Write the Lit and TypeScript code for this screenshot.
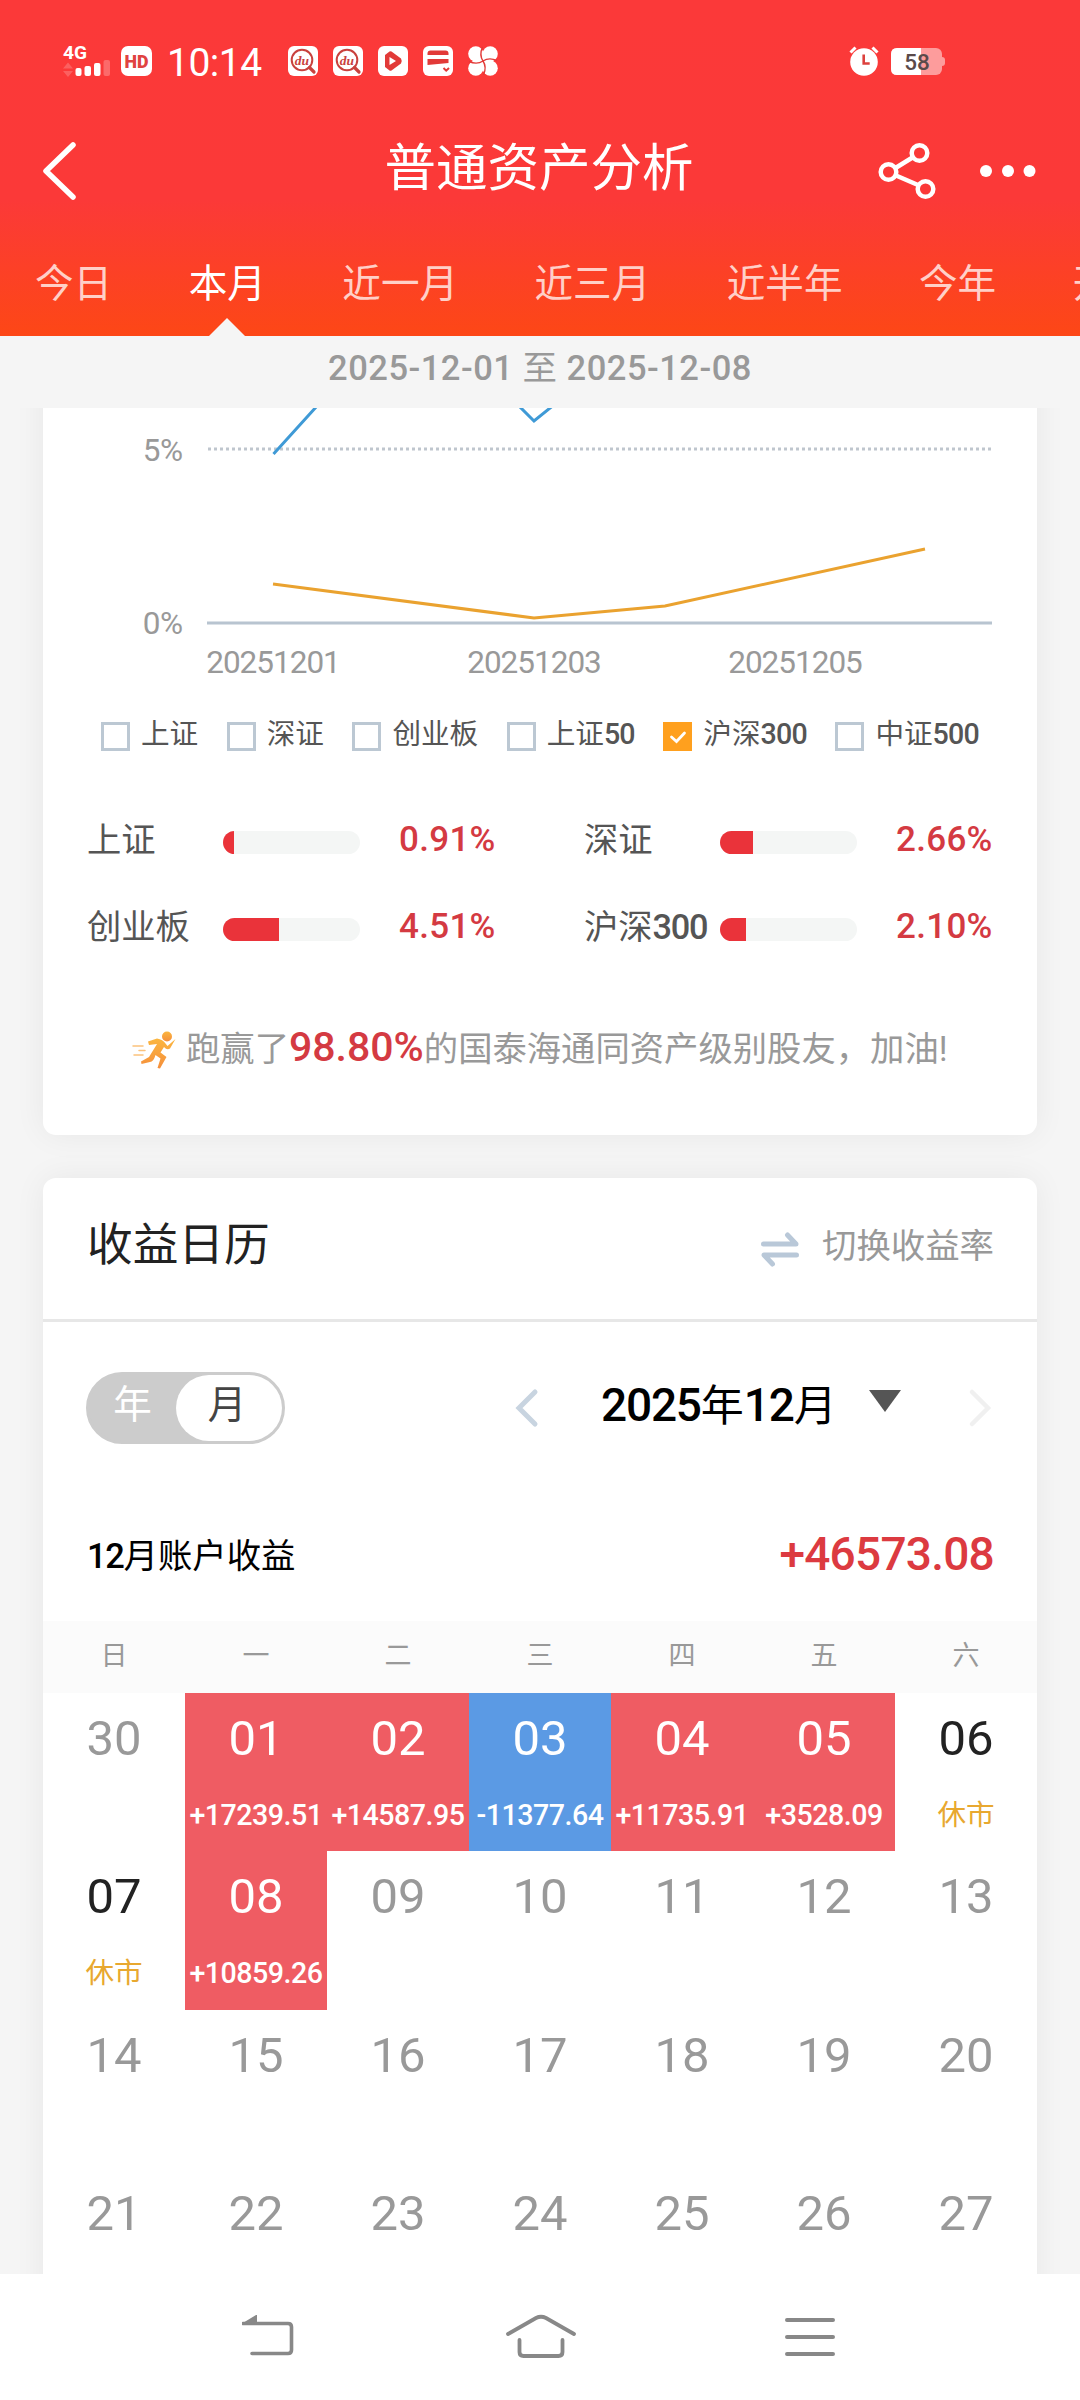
import { LitElement, html, svg, css } from "lit";
import { customElement } from "lit/decorators.js";
import { classMap } from "lit/directives/class-map.js";

interface Day {
  n: string;
  state?: "up" | "down" | "closed";
  note?: string;
}

const TABS = ["今日", "本月", "近一月", "近三月", "近半年", "今年", "开户以来"];

const INDEXES = ["上证", "深证", "创业板", "上证50", "沪深300", "中证500"];

const STATS = [
  { name: "上证", width: 11, value: "0.91%" },
  { name: "深证", width: 33, value: "2.66%" },
  { name: "创业板", width: 56, value: "4.51%" },
  { name: "沪深300", width: 26, value: "2.10%" },
];

const WEEK = ["日", "一", "二", "三", "四", "五", "六"];

const MARKED: Day[] = [
  { n: "30" },
  { n: "01", state: "up", note: "+17239.51" },
  { n: "02", state: "up", note: "+14587.95" },
  { n: "03", state: "down", note: "-11377.64" },
  { n: "04", state: "up", note: "+11735.91" },
  { n: "05", state: "up", note: "+3528.09" },
  { n: "06", state: "closed", note: "休市" },
  { n: "07", state: "closed", note: "休市" },
  { n: "08", state: "up", note: "+10859.26" },
];

const DAYS: Day[] = [
  ...MARKED,
  ...Array.from({ length: 19 }, (_, i) => ({ n: String(i + 9).padStart(2, "0") })),
];

/** Wraps the latin digit runs so that they can be spaced more tightly. */
const mixed = (text: string) =>
  text
    .split(/(\d+)/)
    .filter((part) => part)
    .map((part) => (/\d/.test(part) ? html`<span class="num">${part}</span>` : part));

const duIcon = html`<svg class="app" viewBox="0 0 30 30">
  <rect width="30" height="30" rx="6" fill="#fff" />
  <circle cx="14" cy="14" r="10.3" fill="none" stroke="#c9413d" stroke-width="2" />
  <path d="M21.5 21.5l4.500 4.500" stroke="#c9413d" stroke-width="3.2" stroke-linecap="round" />
  <text x="14" y="18.800" text-anchor="middle" class="du">du</text>
</svg>`;

@customElement("app-root")
export class AppRoot extends LitElement {
  static styles = css`
    :host {
      display: block;
      width: 1080px;
      height: 2400px;
      overflow: hidden;
      font-family: Roboto, "Noto Sans CJK SC", sans-serif;
      color: #222;
    }
    * {
      box-sizing: border-box;
    }
    svg {
      display: block;
      flex: none;
    }
    .page {
      display: flex;
      flex-direction: column;
      height: 2400px;
      background: #f5f5f5;
    }

    .head {
      height: 336px;
      flex: none;
      background: linear-gradient(#fb3939 0, #fb3938 200px, #fd4716 336px);
      color: #fff;
      display: flex;
      flex-direction: column;
      overflow: hidden;
    }
    .status {
      height: 122px;
      padding: 0 135px 0 63px;
      display: flex;
      align-items: center;
      flex: none;
    }
    .signal {
      overflow: visible;
    }
    .hd {
      margin-left: 11px;
    }
    .time {
      font-size: 39px;
      line-height: 46px;
      width: 94px;
      margin: 3px 27px 0 15px;
      letter-spacing: -0.5px;
      white-space: nowrap;
    }
    .apps {
      display: flex;
      gap: 15px;
    }
    .app {
      width: 30px;
      height: 30px;
    }
    .du {
      font: italic 700 13.5px "Liberation Serif", serif;
      fill: #c9413d;
    }
    .g4 {
      font: 700 19px Roboto, sans-serif;
      fill: #fff;
    }
    .hdt {
      font: 900 18.5px Roboto, sans-serif;
      fill: #e04340;
    }
    .alarm {
      margin-left: auto;
      margin-right: 12px;
    }
    .batt {
      font: 500 22.5px Roboto, sans-serif;
      fill: #5a4a4a;
    }

    .bar {
      height: 98px;
      padding: 0 44px 0 42px;
      display: grid;
      grid-template-columns: 200px 1fr 200px;
      align-items: center;
      flex: none;
    }
    .title {
      text-align: center;
      font-size: 51.5px;
      line-height: 60px;
      padding-bottom: 4px;
    }
    .tools {
      display: flex;
      justify-content: flex-end;
      align-items: center;
      gap: 44px;
    }
    .tabs {
      height: 116px;
      flex: none;
      display: flex;
      gap: 76.5px;
      padding-left: 35px;
      font-size: 38.6px;
      line-height: 46px;
      white-space: nowrap;
      color: #ffd0c8;
    }
    .tab {
      flex: none;
      height: 116px;
      padding-top: 41px;
      display: flex;
      flex-direction: column;
      align-items: center;
    }
    .tab.on {
      color: #fff;
    }
    .tab.on::after {
      content: "";
      margin-top: 11px;
      border: 18px solid transparent;
      border-top: 0;
      border-bottom-color: #f5f5f5;
    }

    .range {
      height: 72px;
      flex: none;
      text-align: center;
      font-size: 34.5px;
      line-height: 64px;
      font-weight: 500;
      color: #999;
      letter-spacing: 0.5px;
    }
    .zh {
      font-weight: 400;
    }

    .scroll {
      height: 1866px;
      flex: none;
      overflow: hidden;
      padding: 0 43px;
    }
    .card {
      background: #fff;
      border-radius: 13px;
      box-shadow: 0 0 32px rgba(0, 0, 0, 0.06);
    }
    .perf {
      height: 787px;
      margin-top: -60px;
      padding-top: 60px;
    }
    .chart {
      width: 994px;
      height: 284px;
    }
    .axis {
      font: 400 31.5px Roboto, sans-serif;
      fill: #999;
      letter-spacing: -1px;
    }
    .axis.y {
      letter-spacing: -0.5px;
    }
    .legend {
      display: flex;
      align-items: center;
      padding-left: 58px;
      gap: 28.5px;
      height: 88px;
      color: #555;
      font-size: 28.6px;
      line-height: 40px;
      white-space: nowrap;
    }
    .opt {
      display: flex;
      align-items: center;
      gap: 11px;
    }
    .lab {
      padding-bottom: 4px;
    }
    .legend .num {
      letter-spacing: -0.8px;
    }
    .box {
      width: 29px;
      height: 29px;
      border: 3px solid #bcc8d3;
      display: flex;
    }
    .box.on {
      border: 0;
      background: #ffa01e;
    }
    .num {
      font-weight: 500;
      letter-spacing: -1.3px;
    }
    .stats {
      display: grid;
      grid-template-columns: 497px 1fr;
      grid-auto-rows: 87px;
      padding: 19px 0 0 45px;
    }
    .stat {
      display: grid;
      grid-template-columns: 135px 137px 1fr;
      align-items: center;
      font-size: 34.3px;
      line-height: 48px;
      color: #555;
      white-space: nowrap;
    }
    .stat .name {
      margin-left: -1px;
      padding-bottom: 5px;
    }
    .track {
      height: 23px;
      border-radius: 11.5px;
      background: #f4f6f5;
      overflow: hidden;
    }
    .fill {
      height: 23px;
      background: #ea333a;
    }
    .pct {
      padding: 0 0 5px 39px;
      color: #d43a42;
      font-size: 35px;
      font-weight: 500;
      letter-spacing: 0.3px;
    }
    .beat {
      height: 76px;
      margin-top: 39px;
      display: flex;
      align-items: center;
      padding-left: 89px;
      font-size: 34.35px;
      line-height: 50px;
      color: #999;
      white-space: nowrap;
    }
    .beat .txt {
      margin-left: 9px;
      padding-bottom: 5px;
    }
    .beat b {
      font-size: 41px;
      font-weight: 500;
      color: #d43a42;
    }

    .cal {
      height: 1300px;
      margin-top: 43px;
    }
    .calhead {
      height: 144px;
      padding: 0 43px 0 44px;
      border-bottom: 3px solid #e7e7e7;
      display: flex;
      align-items: center;
    }
    .calname {
      font-size: 45.7px;
      line-height: 60px;
      padding-bottom: 6px;
      flex: 1;
    }
    .switch {
      font-size: 34.4px;
      line-height: 48px;
      color: #999;
      margin-left: 23px;
      padding-bottom: 5px;
    }
    .picker {
      height: 172px;
      display: flex;
      align-items: center;
      padding: 0 45px 0 43px;
    }
    .toggle {
      width: 199px;
      height: 72px;
      border-radius: 36px;
      background: #ccc;
      border: 3px solid #ccc;
      display: flex;
      font-size: 38.6px;
      line-height: 60px;
      text-align: center;
      color: #fff;
    }
    .toggle .yr {
      width: 87px;
    }
    .toggle .mo {
      flex: 1;
      border-radius: 33px;
      background: #fff;
      color: #444;
      padding-right: 4px;
    }
    .prev {
      margin-left: 230px;
    }
    .month {
      margin-left: 62px;
      width: 240px;
      font-size: 43px;
      line-height: 60px;
      color: #000;
      white-space: nowrap;
      padding-bottom: 5px;
    }
    .month .num {
      font-size: 46px;
      letter-spacing: -1.2px;
    }
    .drop {
      margin-left: 28px;
      border: 16px solid transparent;
      border-top: 22px solid #555;
      border-bottom: 0;
      margin-bottom: 14px;
    }
    .next {
      margin-left: auto;
    }
    .total {
      height: 127px;
      padding: 0 43px 7px 44px;
      display: flex;
      justify-content: space-between;
      align-items: center;
      font-size: 34.4px;
      color: #000;
    }
    .total .lead {
      padding-bottom: 2px;
    }
    .total .sum {
      font-size: 46px;
      font-weight: 500;
      color: #dc3a40;
      letter-spacing: -0.75px;
    }
    .week {
      height: 72px;
      display: grid;
      grid-template-columns: repeat(7, 142px);
      text-align: center;
      font-size: 27px;
      line-height: 71px;
      color: #999;
      background: #fbfbfb;
    }
    .days {
      display: grid;
      grid-template-columns: repeat(7, 142px);
      grid-auto-rows: 158.4px;
    }
    .day {
      display: flex;
      flex-direction: column;
      align-items: center;
      padding-top: 16px;
      color: #999;
    }
    .day .n {
      font-size: 49px;
      line-height: 60px;
    }
    .day .note {
      margin-top: 26px;
      font-size: 28.6px;
      line-height: 40px;
      font-weight: 500;
      letter-spacing: -0.5px;
      white-space: nowrap;
    }
    .day.up {
      background: #ef5c63;
      color: #fff;
    }
    .day.down {
      background: #5b9ae4;
      color: #fff;
    }
    .day.closed {
      color: #222;
    }
    .day.closed .note {
      color: #e8a830;
      font-weight: 400;
      letter-spacing: 0;
    }

    .nav {
      flex: 1;
      background: #fff;
      display: flex;
      padding: 40px 0 0 242px;
    }
    .nav .home {
      margin-left: 212px;
    }
    .nav .menu {
      margin-left: 209px;
    }
  `;

  private status() {
    return html`<div class="status">
      <svg class="signal" width="47" height="34" viewBox="0 0 47 34">
        <text x="0" y="15" class="g4" textLength="24" lengthAdjust="spacingAndGlyphs">4G</text>
        <path d="M0 24.500l5-6 5 6zM0 27l5 6 5-6z" fill="#fff" fill-opacity=".2" />
        <rect x="12.500" y="24" width="6" height="8" rx="2" fill="#fff" />
        <rect x="21.500" y="22" width="6.500" height="10" rx="2" fill="#fff" />
        <rect x="31" y="19" width="6.500" height="13" rx="2" fill="#fff" />
        <rect x="40.500" y="16" width="6.500" height="16" rx="2" fill="#fff" fill-opacity=".25" />
      </svg>
      <svg class="hd" width="31" height="30" viewBox="0 0 31 30">
        <rect width="31" height="30" rx="7" fill="#fff" />
        <text x="3.500" y="21.500" class="hdt" textLength="24" lengthAdjust="spacingAndGlyphs">HD</text>
      </svg>
      <span class="time">10:14</span>
      <div class="apps">
        ${duIcon} ${duIcon}
        <svg class="app" viewBox="0 0 30 30">
          <rect width="30" height="30" rx="6" fill="#fff" />
          <path d="M7 9l4.500-3.500q1-.5 2 0L23 12.500q1.500 2.500 0 5L13.500 24.500q-1 .5-2 0L7 21z" fill="#e23a38" />
          <path d="M11.500 11l6.500 4-6.500 4z" fill="#fff" />
        </svg>
        <svg class="app" viewBox="0 0 30 30">
          <rect width="30" height="30" rx="6" fill="#fff" />
          <path d="M4.500 9V7.500q0-3 3-3h15q3 0 3 3V9z" fill="#e23a38" />
          <path d="M4.500 13h21v4l-21 2z" fill="#e23a38" />
          <path d="M20.500 22l2.700 2.700L26 22" fill="none" stroke="#e23a38" stroke-width="2" />
        </svg>
        <svg class="app" viewBox="0 0 30 30">
          <g fill="#fff">
            <circle cx="7.800" cy="7.800" r="7.600" />
            <circle cx="22.200" cy="7.800" r="7.600" />
            <circle cx="7.800" cy="22.200" r="7.600" />
            <circle cx="22.200" cy="22.200" r="7.600" />
            <rect x="9" y="9" width="12" height="12" />
          </g>
          <path d="M14.500 1q-3.500 8 .5 14 4 6 .5 14M1 15.500q8 3.500 14-.5 6-4 14-.5" fill="none" stroke="#e23a38" stroke-width="1.400" />
        </svg>
      </div>
      <svg class="alarm" width="30" height="30" viewBox="0 0 30 30">
        <circle cx="15" cy="16" r="13.800" fill="#fff" />
        <path d="M1.500 6.500l5-5M28.500 6.500l-5-5" stroke="#fff" stroke-width="3" />
        <path d="M14.700 8.500v9h6" fill="none" stroke="#dc413e" stroke-width="2.600" />
      </svg>
      <svg width="54" height="27" viewBox="0 0 54 27">
        <rect width="51" height="27" rx="6" fill="#fff" fill-opacity=".5" />
        <path d="M51 9q3 0 3 3v3q0 3-3 3z" fill="#fff" fill-opacity=".5" />
        <path d="M6 0h24v27H6q-6 0-6-6V6q0-6 6-6z" fill="#fff" />
        <text x="26" y="22" text-anchor="middle" class="batt">58</text>
      </svg>
    </div>`;
  }

  private header() {
    return html`<header class="head">
      ${this.status()}
      <div class="bar">
        <svg width="34" height="60" viewBox="0 0 34 60">
          <path d="M31 4L4 30l27 26" fill="none" stroke="#fff" stroke-width="5.500" stroke-linecap="round" stroke-linejoin="round" />
        </svg>
        <div class="title">普通资产分析</div>
        <div class="tools">
          <svg width="58" height="58" viewBox="0 0 58 58" fill="none" stroke="#fff" stroke-width="4.500">
            <circle cx="10.500" cy="30" r="7.800" />
            <circle cx="41.500" cy="11" r="7.800" />
            <circle cx="47.500" cy="47" r="7.800" />
            <path d="M17.500 26L34.500 15.500M18 33.500l22 9.500" />
          </svg>
          <svg width="56" height="12" viewBox="0 0 56 12" fill="#fff">
            <circle cx="6" cy="6" r="6" />
            <circle cx="28" cy="6" r="6" />
            <circle cx="49.500" cy="6" r="6" />
          </svg>
        </div>
      </div>
      <nav class="tabs">
        ${TABS.map((t, i) => html`<div class=${classMap({ tab: true, on: i === 1 })}>${t}</div>`)}
      </nav>
    </header>`;
  }

  private chart() {
    const labels = [
      [230, "20251201"],
      [491, "20251203"],
      [752, "20251205"],
    ];
    return html`<svg class="chart" viewBox="0 0 994 284">
      <text x="139.500" y="53" text-anchor="end" class="axis y">5%</text>
      <text x="139.500" y="226" text-anchor="end" class="axis y">0%</text>
      <path d="M165 41H949" stroke="#bfc6ce" stroke-width="3" stroke-dasharray="3 3" />
      <path d="M164 215H949" stroke="#b8c4d0" stroke-width="3" />
      <path d="M230.500 46L274 -2L360 -80L472 -6L491 13L512 -4L560 -44" fill="none" stroke="#3f9ad6" stroke-width="3" />
      <path d="M230 176L491 210L622 198L882 141" fill="none" stroke="#eaa22f" stroke-width="3" />
      ${labels.map(([x, t]) => svg`<text x=${x} y="265" text-anchor="middle" class="axis">${t}</text>`)}
    </svg>`;
  }

  private performance() {
    return html`<section class="card perf">
      ${this.chart()}
      <div class="legend">
        ${INDEXES.map((name, i) => {
          const on = i === 4;
          return html`<div class="opt">
            <span class=${classMap({ box: true, on })}>
              ${on
                ? html`<svg width="29" height="29" viewBox="0 0 29 29">
                    <path d="M8.500 15l5 4.500 8-8.500" fill="none" stroke="#fff" stroke-width="2.800" stroke-linecap="round" />
                  </svg>`
                : null}
            </span>
            <span class="lab">${mixed(name)}</span>
          </div>`;
        })}
      </div>
      <div class="stats">
        ${STATS.map(
          (s) => html`<div class="stat">
            <span class="name">${mixed(s.name)}</span>
            <div class="track"><div class="fill" style="width:${s.width}px"></div></div>
            <span class="pct">${s.value}</span>
          </div>`
        )}
      </div>
      <div class="beat">
        <svg width="45" height="38" viewBox="0 0 45 38">
          <defs>
            <linearGradient id="run" x1="0" y1="0" x2="0" y2="1">
              <stop offset="0" stop-color="#fbb63f" />
              <stop offset="1" stop-color="#f58f3c" />
            </linearGradient>
          </defs>
          <g fill="none" stroke="#fbc27c" stroke-width="1.500" stroke-linecap="round">
            <path d="M1 15h10M7 19.500h6M2 24h9" />
          </g>
          <circle cx="35" cy="5.500" r="5" fill="url(#run)" />
          <path
            d="M16 10.500L25 7.500q6 1 8.500 5l2 2.500L43.500 8 38 17.500q-3 2-6-1.500L28.500 21.500l6 4.500L28 37.500 25.500 37l3-9.500-5-3.500q-2 7-5.500 7L9.500 33l-.5-2.500 8-4.500 8-13-8 1z"
            fill="url(#run)"
          />
        </svg>
        <div class="txt">跑赢了<b>98.80%</b>的国泰海通同资产级别股友，加油!</div>
      </div>
    </section>`;
  }

  private calendar() {
    return html`<section class="card cal">
      <div class="calhead">
        <div class="calname">收益日历</div>
        <svg width="38" height="36" viewBox="0 0 38 36" fill="none" stroke="#b9c8d8" stroke-width="5" stroke-linecap="round" stroke-linejoin="round">
          <path d="M2.500 13H35L26.500 4" />
          <path d="M35.500 24H3l8.500 9" />
        </svg>
        <div class="switch">切换收益率</div>
      </div>
      <div class="picker">
        <div class="toggle"><span class="yr">年</span><span class="mo">月</span></div>
        <svg class="prev" width="24" height="40" viewBox="0 0 24 40">
          <path d="M20 4L4 20l16 16" fill="none" stroke="#c8d4e0" stroke-width="5" stroke-linecap="round" />
        </svg>
        <div class="month">${mixed("2025年12月")}</div>
        <div class="drop"></div>
        <svg class="next" width="24" height="40" viewBox="0 0 24 40">
          <path d="M4 4l16 16L4 36" fill="none" stroke="#f0f0f0" stroke-width="4.500" stroke-linecap="round" />
        </svg>
      </div>
      <div class="total">
        <span class="lead">${mixed("12月账户收益")}</span>
        <span class="sum">+46573.08</span>
      </div>
      <div class="week">${WEEK.map((d) => html`<span>${d}</span>`)}</div>
      <div class="days">
        ${DAYS.map(
          (d) => html`<div class="day ${d.state ?? ""}">
            <span class="n">${d.n}</span>
            ${d.note ? html`<span class="note">${d.note}</span>` : null}
          </div>`
        )}
      </div>
    </section>`;
  }

  render() {
    return html`<div class="page">
      ${this.header()}
      <div class="range">2025-12-01 <span class="zh">至</span> 2025-12-08</div>
      <main class="scroll">${this.performance()} ${this.calendar()}</main>
      <footer class="nav">
        <svg width="52" height="44" viewBox="0 0 52 44">
          <path d="M1 9.500H46q3.500 0 3.500 3.500V36q0 3.500-3.500 3.500H10" fill="none" stroke="#888" stroke-width="3.600" stroke-linecap="round" />
          <path d="M0 9.500L14 1h1v9z" fill="#888" />
        </svg>
        <svg class="home" width="70" height="46" viewBox="0 0 70 46" fill="none" stroke="#888" stroke-width="3.800" stroke-linecap="round">
          <path d="M2 20L30 4q5-2.500 10 0L68 20" />
          <path d="M13.500 26v12q0 4 4 4h35q4 0 4-4V26" />
        </svg>
        <svg class="menu" width="50" height="46" viewBox="0 0 50 46" stroke="#888" stroke-width="4" stroke-linecap="round">
          <path d="M2 6h46M2 23h46M2 40h46" />
        </svg>
      </footer>
    </div>`;
  }
}
